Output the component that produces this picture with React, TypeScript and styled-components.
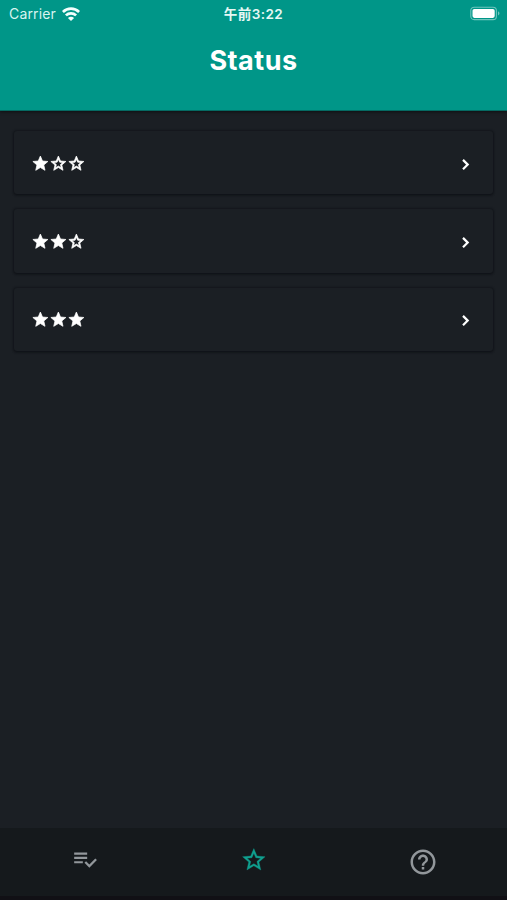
import React from 'react';
import styled, { createGlobalStyle } from 'styled-components';

const GlobalStyle = createGlobalStyle`
  * { box-sizing: border-box; }
  body { margin: 0; background: #1b1f24; font-family: Inter, "Noto Sans CJK JP", sans-serif; }
`;

const Screen = styled.div`
  width: 507px;
  height: 900px;
  display: flex;
  flex-direction: column;
  background: #1b1f24;
  overflow: hidden;
`;

const Header = styled.header`
  height: 111px;
  flex: none;
  background: #009688;
  color: #fff;
  border-bottom: 1px solid #056a62;
  box-shadow: 0 1px 3px rgba(0, 0, 0, 0.5);
`;

const StatusBar = styled.div`
  height: 27px;
  display: grid;
  grid-template-columns: 1fr auto 1fr;
  align-items: center;
  padding: 0 6px 0 9px;
`;

const Carrier = styled.div`
  display: flex;
  align-items: center;
  gap: 6px;
  font-size: 14px;
  letter-spacing: 0.15px;
  color: #d8f4f0;
`;

const Clock = styled.div`
  margin-right: 3px;
  font-size: 13.5px;
  font-weight: 600;
  letter-spacing: 0.45px;
  line-height: 20px;
  color: #e6f8f5;
`;

const BatterySlot = styled.div`
  display: flex;
  justify-content: flex-end;
`;

const Title = styled.h1`
  margin: 16px 0 0;
  font-size: 27px;
  line-height: 36px;
  font-weight: 700;
  letter-spacing: 0.5px;
  text-align: center;
`;

const List = styled.main`
  flex: 1;
  display: flex;
  flex-direction: column;
  gap: 15px;
  padding: 20px 14px;
`;

const Card = styled.div`
  height: 63.3px;
  display: flex;
  align-items: center;
  justify-content: space-between;
  padding: 2px 18px 0 17px;
  border-radius: 3px;
  background: #1b1f24;
  box-shadow: 0 0 2px 1px rgba(8, 11, 14, 0.4), 0 2px 2px rgba(8, 11, 14, 0.25);
`;

const Stars = styled.div`
  display: flex;
  color: #fff;
`;

const TabBar = styled.nav`
  height: 72px;
  flex: none;
  display: grid;
  grid-template-columns: repeat(3, 1fr);
  background: #15191c;
  border-bottom: 4px solid #111015;
`;

const Tab = styled.div<{ $active?: boolean; $top: number }>`
  display: flex;
  justify-content: center;
  align-items: flex-start;
  padding-top: ${(p) => p.$top}px;
  color: ${(p) => (p.$active ? '#10a08f' : '#92979b')};
`;

const Icon = styled.svg`
  display: block;
  fill: currentColor;
`;

const STAR = 'M12 17.27 18.18 21l-1.64-7.03L22 9.24l-7.19-.61L12 2 9.19 8.63 2 9.24l5.46 4.73L5.82 21z';
const STAR_OUTLINE =
  'M22 9.24l-7.19-.62L12 2 9.19 8.63 2 9.24l5.46 4.73L5.82 21 12 17.27 18.18 21l-1.63-7.03L22 9.24zM12 15.4l-3.76 2.27 1-4.28-3.32-2.88 4.38-.38L12 6.1l1.71 4.04 4.38.38-3.32 2.88 1 4.28L12 15.4z';

const Star = ({ filled }: { filled: boolean }) => (
  <Icon
    width="18"
    height="18"
    viewBox="-0.5 0.6 24 24"
    stroke="currentColor"
    strokeWidth={1}
    strokeLinejoin="round"
  >
    <path d={filled ? STAR : STAR_OUTLINE} />
  </Icon>
);

const Wifi = () => (
  <Icon width="18" height="14" viewBox="0 0 18 14">
    <g fill="none" stroke="#f3fffd" strokeWidth="2.7">
      <path d="M0.9 4.9C5.5 .5 12.5 .5 17.1 4.9" />
      <path d="M3.9 8.4C6.8 5.6 11.2 5.6 14.1 8.4" />
    </g>
    <path fill="#f3fffd" d="M9 14 5.9 11C7.6 9.4 10.4 9.4 12.1 11z" />
  </Icon>
);

const Battery = () => (
  <Icon width="31" height="15" viewBox="0 0 31 15">
    <rect x="0.8" y="1.2" width="25.6" height="12.4" rx="3.4" fill="none" stroke="#6fc5bd" strokeWidth="1.1" />
    <rect x="2.5" y="2.9" width="22.2" height="9" rx="1.8" fill="#fff" />
    <path d="M28 5.3Q31 7.4 28 9.5z" fill="#6fc5bd" />
  </Icon>
);

const Chevron = () => (
  <Icon width="18" height="18" viewBox="0 0 18 18">
    <path d="M6 4.9 10.7 9.6 6 14.3" fill="none" stroke="#fff" strokeWidth="2.2" />
  </Icon>
);

const App = () => (
  <>
    <GlobalStyle />
    <Screen>
      <Header>
        <StatusBar>
          <Carrier>
            Carrier
            <Wifi />
          </Carrier>
          <Clock>午前3:22</Clock>
          <BatterySlot>
            <Battery />
          </BatterySlot>
        </StatusBar>
        <Title>Status</Title>
      </Header>
      <List>
        {[1, 2, 3].map((rating) => (
          <Card key={rating}>
            <Stars>
              {[1, 2, 3].map((n) => (
                <Star key={n} filled={n <= rating} />
              ))}
            </Stars>
            <Chevron />
          </Card>
        ))}
      </List>
      <TabBar>
        <Tab $top={18}>
          <Icon width="26" height="26" viewBox="0 0 24 24">
            <path d="M14 10H2v2h12v-2m0-4H2v2h12V6M2 16h8v-2H2v2m19.5-4.5L23 13l-7 7-4.5-4.5L13 14l3 3 5.5-5.5z" />
          </Icon>
        </Tab>
        <Tab $active $top={18}>
          <Icon width="27" height="27" viewBox="-0.3 -0.3 24 24" stroke="currentColor" strokeWidth={0.3}>
            <path d={STAR_OUTLINE} />
          </Icon>
        </Tab>
        <Tab $top={19}>
          <Icon width="30" height="30" viewBox="0 0 24 24">
            <path d="M11 18h2v-2h-2v2zm1-16C6.48 2 2 6.48 2 12s4.48 10 10 10 10-4.48 10-10S17.52 2 12 2zm0 18c-4.41 0-8-3.59-8-8s3.59-8 8-8 8 3.59 8 8-3.59 8-8 8zm0-14c-2.21 0-4 1.79-4 4h2c0-1.1.9-2 2-2s2 .9 2 2c0 2-3 1.75-3 5h2c0-2.25 3-2.5 3-5 0-2.21-1.79-4-4-4z" />
          </Icon>
        </Tab>
      </TabBar>
    </Screen>
  </>
);

export default App;
